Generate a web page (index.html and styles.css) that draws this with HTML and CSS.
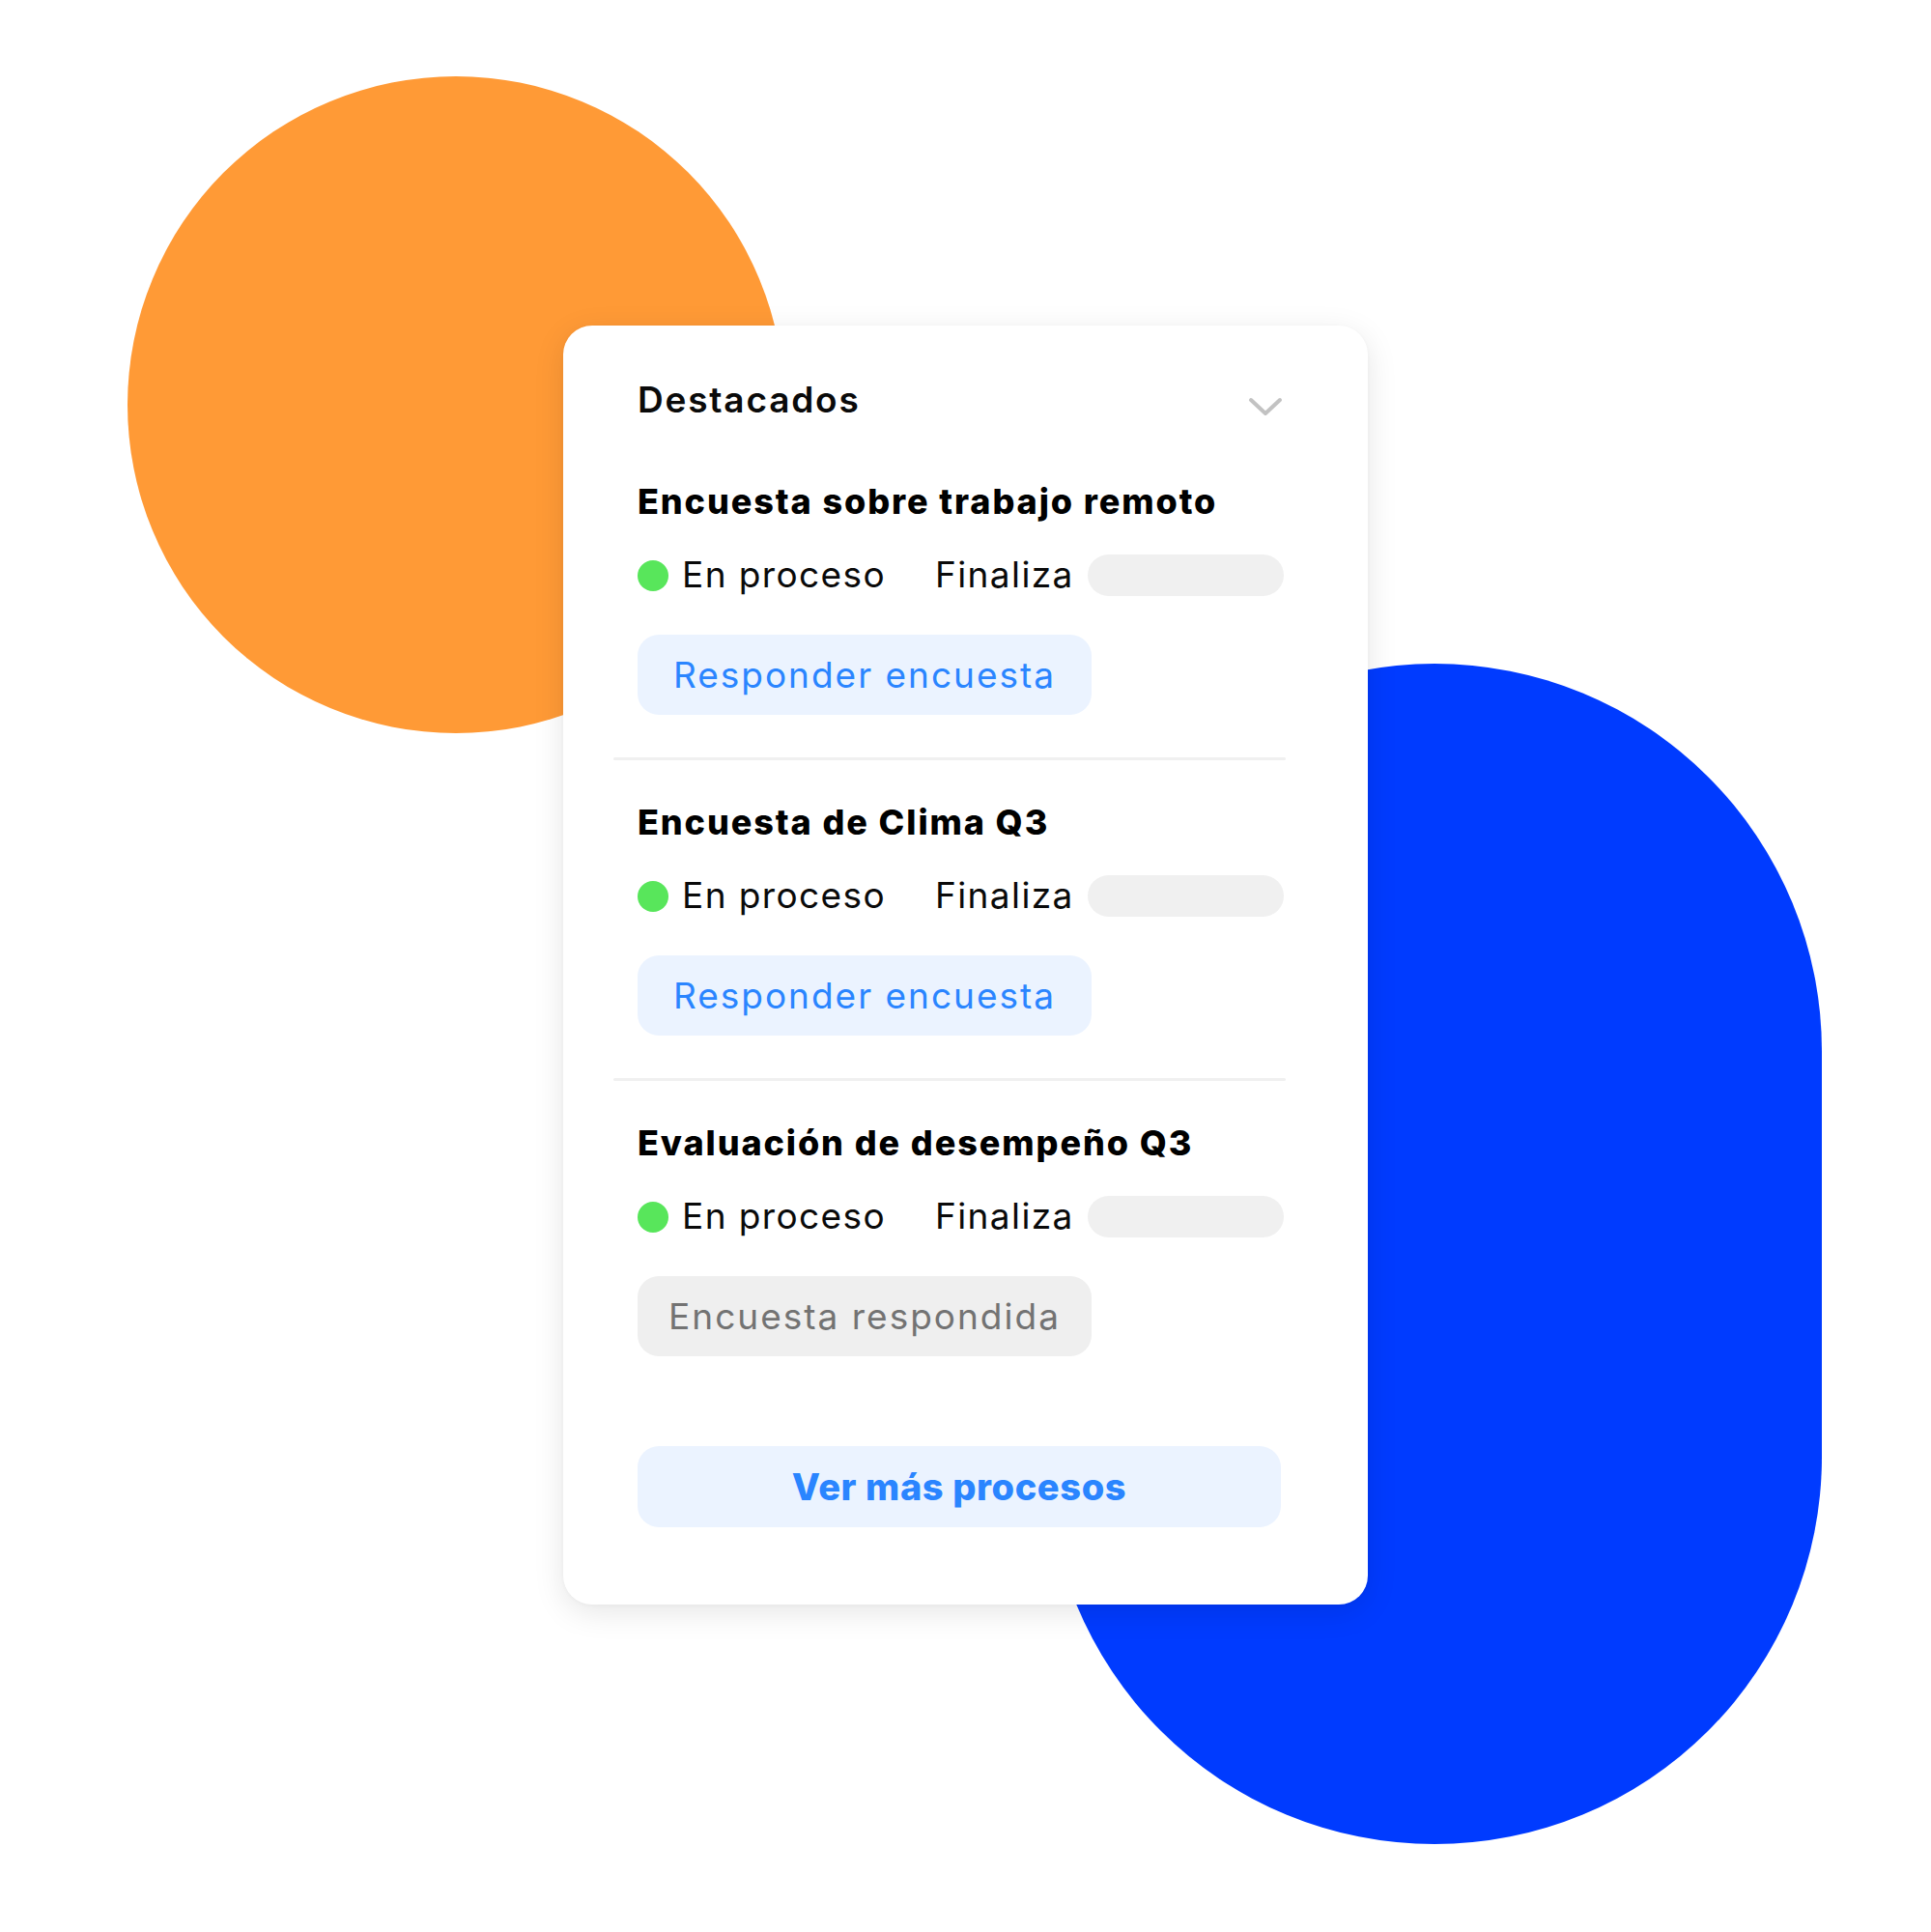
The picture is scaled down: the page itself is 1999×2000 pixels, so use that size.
FILE: index.html
```html
<!DOCTYPE html>
<html lang="es">
<head>
<meta charset="utf-8">
<title>Destacados</title>
<link rel="stylesheet" href="styles.css">
</head>
<body>
<div class="stage">
  <div class="blob blob-orange"></div>
  <div class="blob blob-blue"></div>

  <div class="card">
    <div class="card-header">
      <h2 class="card-title">Destacados</h2>
      <svg class="chevron" width="36" height="21" viewBox="0 0 36 21" aria-hidden="true">
        <polyline points="3,3 18,17 33,3" fill="none" stroke="#c2c2c2" stroke-width="4" stroke-linecap="round" stroke-linejoin="round"/>
      </svg>
    </div>

    <section class="item">
      <h3 class="item-title">Encuesta sobre trabajo remoto</h3>
      <div class="status-row">
        <div class="status"><span class="dot"></span><span class="status-text">En proceso</span></div>
        <span class="ends">Finaliza</span>
        <span class="pill"></span>
      </div>
      <button class="btn btn-primary">Responder encuesta</button>
    </section>
    <hr class="divider">

    <section class="item">
      <h3 class="item-title">Encuesta de Clima Q3</h3>
      <div class="status-row">
        <div class="status"><span class="dot"></span><span class="status-text">En proceso</span></div>
        <span class="ends">Finaliza</span>
        <span class="pill"></span>
      </div>
      <button class="btn btn-primary">Responder encuesta</button>
    </section>
    <hr class="divider">

    <section class="item item-last">
      <h3 class="item-title">Evaluación de desempeño Q3</h3>
      <div class="status-row">
        <div class="status"><span class="dot"></span><span class="status-text">En proceso</span></div>
        <span class="ends">Finaliza</span>
        <span class="pill"></span>
      </div>
      <button class="btn btn-done">Encuesta respondida</button>
    </section>

    <button class="btn-more">Ver más procesos</button>
  </div>
</div>
</body>
</html>
```

FILE: styles.css
```css
* { box-sizing: border-box; }

html, body {
  margin: 0;
  padding: 0;
  background: #ffffff;
}

body {
  font-family: Inter, "Noto Sans", "DejaVu Sans", sans-serif;
  color: #0a0a0a;
}

.stage {
  position: relative;
  width: 1999px;
  height: 2000px;
  padding: 337px 0 0 583px;
  overflow: hidden;
}

/* decorative background shapes on a free canvas */
.blob {
  position: absolute;
  z-index: 0;
}

.blob-orange {
  left: 132px;
  top: 79px;
  width: 680px;
  height: 680px;
  border-radius: 50%;
  background: #ff9a36;
}

.blob-blue {
  left: 1084px;
  top: 687px;
  width: 802px;
  height: 1222px;
  border-radius: 401px;
  background: #003bff;
}

.card {
  position: relative;
  z-index: 1;
  width: 833px;
  padding: 58px 87px 80px 77px;
  background: #ffffff;
  border-radius: 30px;
  box-shadow: 0 8px 32px rgba(0, 0, 0, 0.10), 0 1px 4px rgba(0, 0, 0, 0.03);
}

.card-header {
  display: flex;
  justify-content: space-between;
  align-items: flex-start;
  margin-bottom: 23px;
}

.card-title {
  margin: 0;
  font-size: 37px;
  line-height: 37px;
  font-weight: 600;
  letter-spacing: 1.8px;
  color: #0a0a0a;
}

.chevron {
  display: block;
  margin-top: 16px;
  margin-right: 1px;
}

.item {
  padding: 47px 0 44px;
}

.item-last {
  padding-bottom: 0;
}

.item-title {
  margin: 0 0 37px;
  font-size: 36px;
  line-height: 35px;
  font-weight: 800;
  letter-spacing: 1.9px;
  color: #000000;
}

.status-row {
  display: flex;
  align-items: center;
  height: 43px;
  margin-bottom: 40px;
}

.status {
  display: flex;
  align-items: center;
  width: 308px;
  flex: none;
}

.dot {
  width: 32px;
  height: 32px;
  border-radius: 50%;
  background: #58e65b;
  margin-right: 14px;
  flex: none;
}

.status-text,
.ends {
  font-size: 37px;
  line-height: 37px;
  font-weight: 400;
  letter-spacing: 1.4px;
  color: #0a0a0a;
  margin-top: -3px;
}

.pill {
  flex: 1;
  height: 43px;
  margin-left: 14px;
  border-radius: 22px;
  background: #f0f0f0;
}

.btn {
  display: block;
  width: 470px;
  height: 83px;
  padding: 0;
  border: 0;
  border-radius: 22px;
  font-family: inherit;
  font-size: 37px;
  line-height: 37px;
  font-weight: 400;
  letter-spacing: 2px;
  text-align: center;
}

.btn-primary {
  background: #ebf3ff;
  color: #2a85ff;
}

.btn-done {
  background: #efefef;
  color: #737373;
}

.divider {
  height: 3px;
  margin: 0 -2px 0 -25px;
  border: 0;
  border-radius: 2px;
  background: #f0f0f0;
}

.btn-more {
  display: block;
  width: 666px;
  height: 84px;
  margin-top: 93px;
  padding: 0;
  border: 0;
  border-radius: 22px;
  background: #ebf3ff;
  color: #2a85ff;
  font-family: inherit;
  font-size: 38px;
  line-height: 38px;
  font-weight: 800;
  letter-spacing: 0.6px;
  text-align: center;
}
```
